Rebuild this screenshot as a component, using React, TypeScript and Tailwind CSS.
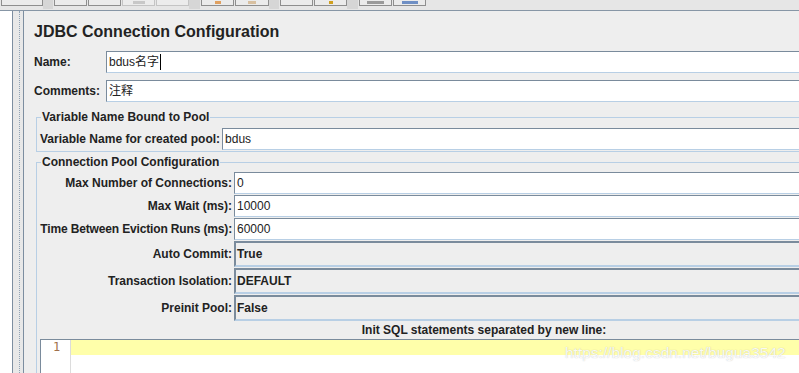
import React from "react";

const toolbar: { w: number; gapBefore?: number; light?: boolean; icon?: string; iconW?: number }[] = [
  { w: 42 },
  { w: 33, gapBefore: 10 },
  { w: 33 },
  { w: 33, light: true, icon: "#c8c8c8", iconW: 12 },
  { w: 33, light: true },
  { w: 33, gapBefore: 11, icon: "#e0a060", iconW: 6 },
  { w: 34, icon: "#d8c0a0", iconW: 8 },
  { w: 33, gapBefore: 10 },
  { w: 33, icon: "#d0a020", iconW: 4 },
  { w: 33, gapBefore: 11, icon: "#9a9a9a", iconW: 17 },
  { w: 33, icon: "#6f8fc4", iconW: 16 },
];

function TextInput({ value, caret }: { value: string; caret?: boolean }) {
  return (
    <div className="flex h-[22px] flex-1 items-center border border-b-[#b8cfe5] border-l-[#7a8b9c] border-r-[#b8cfe5] border-t-[#7a8b9c] bg-white pl-[2px] text-[12px] text-[#222]">
      <span>{value}</span>
      {caret && <span className="ml-[1px] h-[16px] w-[1px] bg-black" />}
    </div>
  );
}

function Combo({ value }: { value: string }) {
  return (
    <div className="flex h-[26px] flex-1 items-center border-2 border-b-[#b8cfe5] border-l-[#7a8b9c] border-r-[#b8cfe5] border-t-[#7a8b9c] bg-[#eeeeee] pl-[1px] text-[12px] font-bold text-[#222]">
      {value}
    </div>
  );
}

const pool: { label: string; value: string; combo?: boolean; tight?: boolean }[] = [
  { label: "Max Number of Connections:", value: "0" },
  { label: "Max Wait (ms):", value: "10000" },
  { label: "Time Between Eviction Runs (ms):", value: "60000", tight: true },
  { label: "Auto Commit:", value: "True", combo: true },
  { label: "Transaction Isolation:", value: "DEFAULT", combo: true },
  { label: "Preinit Pool:", value: "False", combo: true },
];

export default function App() {
  return (
    <div className="relative h-[373px] w-[799px] overflow-hidden bg-[#eeeeee] font-['Liberation_Sans','Noto_Sans_CJK_SC',sans-serif] text-[#222]">
      {/* toolbar, cut at the top */}
      <div className="flex h-[11px] items-start border-b border-[#8796a6] bg-[#e6e6e6]">
        {toolbar.map((b, i) => (
          <React.Fragment key={i}>
            {b.gapBefore && <div className="h-[9px] bg-[#d6d6d6]" style={{ width: b.gapBefore }} />}
            <div
              className={`flex h-[6px] items-end justify-center border border-t-0 ${
                b.light ? "border-[#c4c4c4] bg-[#ececec]" : "border-[#8e8e8e] bg-[#ebebeb]"
              } ml-[1px]`}
              style={{ width: b.w }}
            >
              {b.icon && <div className="mb-[1px] h-[3px]" style={{ width: b.iconW, background: b.icon }} />}
            </div>
          </React.Fragment>
        ))}
      </div>

      <div className="flex h-[362px]">
        {/* tree panel */}
        <div className="w-[13px] shrink-0 border-r border-[#7d8ea0] bg-white" />
        {/* splitter */}
        <div className="flex w-[11px] shrink-0 border-r border-[#7d8ea0] bg-[#e8e8e8]">
          <div className="ml-[6px] h-full border-l border-dotted border-[#8fa2b5]" />
        </div>

        {/* config panel, wider than the window */}
        <div className="w-[904px] shrink-0 pl-[10px] pt-[11px]">
          <h1 className="text-[16px] font-bold leading-[20px] text-[#222]">JDBC Connection Configuration</h1>

          <div className="mt-[9px] flex items-center">
            <span className="w-[72px] text-[12px] font-bold">Name:</span>
            <TextInput value="bdus名字" caret />
          </div>
          <div className="mt-[7px] flex items-center">
            <span className="w-[72px] text-[12px] font-bold">Comments:</span>
            <TextInput value="注释" />
          </div>

          <fieldset className="ml-[2px] mt-[8px] border border-[#b8cfe5] pb-[1px] pl-[3px]">
            <legend className="ml-[1px] px-[1px] text-[12px] font-bold leading-[14px]">Variable Name Bound to Pool</legend>
            <div className="mt-[4px] flex items-center">
              <span className="whitespace-nowrap pr-[2px] text-[12px] font-bold">Variable Name for created pool:</span>
              <TextInput value="bdus" />
            </div>
          </fieldset>

          <fieldset className="ml-[2px] mt-[3px] border-l border-t border-[#b8cfe5] pl-[3px]">
            <legend className="ml-[1px] px-[1px] text-[12px] font-bold leading-[14px]">Connection Pool Configuration</legend>
            <div className="mt-[3px] flex flex-col gap-[1px]">
              {pool.map((r) => (
                <div key={r.label} className="flex items-center">
                  <span
                    className={`flex w-[194px] shrink-0 justify-end whitespace-nowrap pr-[2px] text-[12px] font-bold ${
                      r.tight ? "tracking-[-0.15px]" : ""
                    }`}
                  >
                    {r.label}
                  </span>
                  {r.combo ? <Combo value={r.value} /> : <TextInput value={r.value} />}
                </div>
              ))}
            </div>
            <div className="py-[3px] text-center text-[12px] font-bold leading-[12px]">
              Init SQL statements separated by new line:
            </div>
            <div className="flex h-[40px] border-l border-t border-[#7a8b9c] bg-white">
              <div className="w-[30px] shrink-0 border-r border-[#dcdcdc] pl-[12px] font-['DejaVu_Sans_Mono',monospace] text-[12px] leading-[15px] text-[#a0704c]">
                1
              </div>
              <div className="flex-1">
                <div className="h-[15px] bg-[#ffffaa]" />
              </div>
            </div>
          </fieldset>
        </div>
      </div>

      {/* watermark */}
      <div className="absolute left-[565px] top-[343px] whitespace-nowrap text-[15.5px] leading-[20px] text-white/90 [text-shadow:0_0_1px_rgba(120,120,120,0.5)]">
        https://blog.csdn.net/bugua3542
      </div>
    </div>
  );
}
